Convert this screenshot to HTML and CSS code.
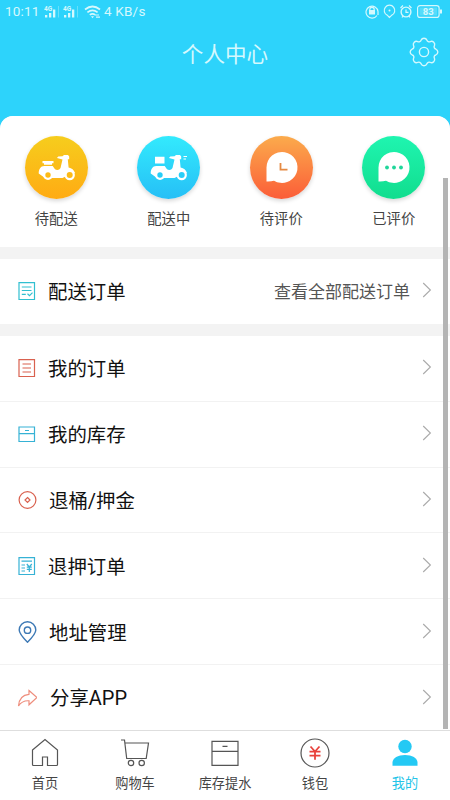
FILE: index.html
```html
<!DOCTYPE html>
<html lang="zh-CN">
<head>
<meta charset="utf-8">
<title>个人中心</title>
<link rel="stylesheet" href="styles.css">
</head>
<body>
<div class="app">
  <header class="header">
    <div class="status">
      <span class="time">10:11</span>
      <svg class="signals" width="36" height="14" viewBox="0 0 36 14" fill="currentColor">
        <g id="sig"><text x="0" y="5.500" class="net">4G</text><path d="M1 10h2.300v2.500H1zM5 8h2.300v4.500H5zM9 4.500h2.300v8H9z"/><path d="M14 1h1v11.500h-1z" opacity=".35"/></g>
        <use href="#sig" x="19"/>
      </svg>
      <svg class="wifi" width="18" height="14" viewBox="0 0 18 14" fill="none" stroke="currentColor" stroke-width="1.700">
        <path d="M1 4.500Q8.500-1.500 16 4.500M3.400 7.300q5.100-4 10.200 0M5.800 9.900q2.700-2 5.400 0"/><path d="M7 11.300h3l-1.500 2z" fill="currentColor" stroke="none"/><path d="M11 10h4M12 12.200h4" stroke-width="1.200"/>
      </svg>
      <span class="speed">4 KB/s</span>
      <svg class="sys" width="79" height="15" viewBox="0 0 79 15" fill="none" stroke="currentColor" stroke-width="1.200">
        <path d="M12 11.500A6 6 0 1 1 13 7.500V11M4.800 6.700V5.500a2.200 2.200 0 0 1 4.400 0v1.200"/><path d="M4 6h6v4.500H4z" fill="currentColor" stroke="none"/>
        <path d="M24.500 13.500l-2-2.100a5.300 5.300 0 1 1 4 0z"/><circle cx="24.500" cy="6.500" r="1" fill="currentColor" stroke="none"/>
        <circle cx="41" cy="8" r="4.900" stroke-width="1.400"/><path d="M41 5.500V8.300h2.500M35.500 4l2.500-2.500M46.500 4L44 1.500M37 13.500l1-1.500M45 13.500l-1-1.500"/>
        <rect x="52.600" y="1.600" width="21.500" height="11.800" rx="2.500"/><path d="M75 5.500h2v4h-2z" fill="currentColor" stroke="none"/><rect x="54.500" y="3.500" width="17.500" height="8" fill="currentColor" stroke="none" opacity=".25"/>
        <text x="63.300" y="11" text-anchor="middle" class="battery">83</text>
      </svg>
    </div>
    <h1 class="title">个人中心</h1>
    <svg class="gear" width="30" height="30" viewBox="-15 -15 30 30" fill="none" stroke="currentColor" stroke-width="1.400">
      <path d="M11.840-2.950A3.200 3.200 0 0 1 11.840 2.950A2.200 2.200 0 0 0 10.460 6.290A3.200 3.200 0 0 1 6.290 10.460A2.200 2.200 0 0 0 2.950 11.840A3.200 3.200 0 0 1-2.950 11.840A2.200 2.200 0 0 0-6.290 10.460A3.200 3.200 0 0 1-10.460 6.290A2.200 2.200 0 0 0-11.840 2.950A3.200 3.200 0 0 1-11.840-2.950A2.200 2.200 0 0 0-10.460-6.290A3.200 3.200 0 0 1-6.290-10.460A2.200 2.200 0 0 0-2.950-11.840A3.200 3.200 0 0 1 2.950-11.840A2.200 2.200 0 0 0 6.290-10.460A3.200 3.200 0 0 1 10.460-6.290A2.200 2.200 0 0 0 11.840-2.950Z"/><circle r="4.600"/>
    </svg>
  </header>

  <main class="content">
    <section class="shortcuts">
      <div class="shortcut">
        <svg class="disc yellow" viewBox="0 0 63 63">
          <g fill="#fff"><path d="M17.500 25h11v2.300h-1.500v1.500h-8v-1.500h-1.500z"/><path d="M32 22l1.200-1.500 4.300-.3 1.500-1.200h4l1.200 1.500v2.800h-1.400l.8 8.200c3.200.5 5.400 2.500 6.400 5.500l-5.500 1.500-7 3.500H20l-6.300-4.500c0-4.500 2-7.300 5.500-7.500h8.500l2.300 3.200c2 1.300 4.500.8 5.500-1.200l2-8.500z"/><circle cx="23" cy="39" r="4.900"/><circle cx="44.700" cy="39" r="5.200"/></g><g fill="#fdbb17"><circle cx="23" cy="39" r="2.700"/><circle cx="44.700" cy="39" r="3"/></g>
        </svg>
        <span>待配送</span>
      </div>
      <div class="shortcut">
        <svg class="disc blue" viewBox="0 0 63 63">
          <g fill="#fff"><path d="M18 20.800h9.500v6.700H18zM46.500 20h3.500v1h-3.500zM46.500 22.500h2.500v1h-2.500z"/><path d="M32 22l1.200-1.500 4.300-.3 1.500-1.200h4l1.200 1.500v2.800h-1.400l.8 8.200c3.200.5 5.400 2.500 6.400 5.500l-5.500 1.500-7 3.500H20l-6.300-4.500c0-4.500 2-7.300 5.500-7.500h8.500l2.300 3.200c2 1.300 4.500.8 5.500-1.200l2-8.500z"/><circle cx="23" cy="39" r="4.900"/><circle cx="44.700" cy="39" r="5.200"/></g><g fill="#27cef8"><circle cx="23" cy="39" r="2.700"/><circle cx="44.700" cy="39" r="3"/></g>
        </svg>
        <span>配送中</span>
      </div>
      <div class="shortcut">
        <svg class="disc orange" viewBox="0 0 63 63"><path d="M16.500 45.500V31.500a15.500 15.500 0 1 1 7.500 13.200q-3 1-7.500.8z" fill="#fff"/><path d="M30.500 27v6.700h7" fill="none" stroke="#e58a43" stroke-width="1.800"/></svg>
        <span>待评价</span>
      </div>
      <div class="shortcut">
        <svg class="disc green" viewBox="0 0 63 63"><path d="M16.500 45.500V31.500a15.500 15.500 0 1 1 7.500 13.200q-3 1-7.500.8z" fill="#fff"/><g fill="#20d69a"><circle cx="25" cy="31.500" r="1.900"/><circle cx="32" cy="31.500" r="1.900"/><circle cx="39" cy="31.500" r="1.900"/></g></svg>
        <span>已评价</span>
      </div>
    </section>

    <section class="row delivery">
      <svg class="icon cyan" viewBox="0 0 20 20"><path d="M2 1.700h15.500v16.800H2zM4.800 6h9.700M4.800 9.500h9.700M4.800 13.300h4M10.500 12.800l2 1.800 3-3"/></svg>
      <span class="label">配送订单</span><span class="more">查看全部配送订单</span>
      <svg class="chevron" viewBox="0 0 10 16"><path d="M1.200 1l7.200 7-7.200 7"/></svg>
    </section>

    <nav class="menu">
      <div class="row">
        <svg class="icon red" viewBox="0 0 20 20"><path d="M2 1.700h15.500v16.800H2zM5.500 6h8.500M5.500 10h8.500M5.500 14h8.500"/></svg>
        <span class="label">我的订单</span>
        <svg class="chevron" viewBox="0 0 10 16"><path d="M1.200 1l7.200 7-7.200 7"/></svg>
      </div>
      <div class="row">
        <svg class="icon sky" viewBox="0 0 20 20"><path d="M2 3h15.500v14.500H2zM2 9.700h15.500M8 6.500h4"/></svg>
        <span class="label">我的库存</span>
        <svg class="chevron" viewBox="0 0 10 16"><path d="M1.200 1l7.200 7-7.200 7"/></svg>
      </div>
      <div class="row">
        <svg class="icon red" viewBox="0 0 20 20"><circle cx="10.500" cy="10" r="8.400"/><path d="M10.500 7.500l2.500 2.500-2.500 2.500-2.500-2.500z"/></svg>
        <span class="label wide">退桶<span class="latin">/</span>押金</span>
        <svg class="chevron" viewBox="0 0 10 16"><path d="M1.200 1l7.200 7-7.200 7"/></svg>
      </div>
      <div class="row">
        <svg class="icon sky" viewBox="0 0 20 20"><path d="M2 1.700h15.500v16.800H2zM4.500 5.200h10.500M4.500 9h3.500M4.500 12h3.500M4.500 15h3.500M9.800 8l2.500 3 2.500-3M9.800 11.200h5M9.800 13.400h5M12.300 11v5"/></svg>
        <span class="label">退押订单</span>
        <svg class="chevron" viewBox="0 0 10 16"><path d="M1.200 1l7.200 7-7.200 7"/></svg>
      </div>
      <div class="row">
        <svg class="icon navy" viewBox="0 0 20 22"><path d="M10.500 21.200C5 15.700 2.200 12.500 2.200 9a8.300 8.300 0 0 1 16.600 0c0 3.500-2.800 6.700-8.300 12.200z"/><circle cx="10.500" cy="9.200" r="3.200"/></svg>
        <span class="label wide">地址管理</span>
        <svg class="chevron" viewBox="0 0 10 16"><path d="M1.200 1l7.200 7-7.200 7"/></svg>
      </div>
      <div class="row">
        <svg class="icon salmon" viewBox="0 0 20 20"><path d="M12 2.500l8 7-8 7.300v-4C7 12.500 4 14 1.500 18 2 10.500 6 6.800 12 6.300z"/></svg>
        <span class="label share">分享<span class="latin">APP</span></span>
        <svg class="chevron" viewBox="0 0 10 16"><path d="M1.200 1l7.200 7-7.200 7"/></svg>
      </div>
    </nav>
    <div class="scrollbar"></div>
  </main>

  <footer class="tabs">
    <div class="tab">
      <svg viewBox="0 0 30 30"><path d="M2.500 12L15 1.500 27.500 12v14.500a1 1 0 0 1-1 1H17.500v-8.500h-5v8.500H3.500a1 1 0 0 1-1-1z"/></svg><span>首页</span>
    </div>
    <div class="tab">
      <svg viewBox="0 0 30 30"><path d="M1 2h3.500l2.200 18.500h19.500L28.500 5H5"/><circle cx="11" cy="25" r="2.700"/><circle cx="21.700" cy="25" r="2.700"/></svg><span>购物车</span>
    </div>
    <div class="tab">
      <svg viewBox="0 0 30 30"><path d="M2 3.300h26v24H2zM2 13.300h26M12.500 8.300h5"/></svg><span>库存提水</span>
    </div>
    <div class="tab">
      <svg viewBox="0 0 30 30"><circle cx="15" cy="15" r="14"/><path d="M10.500 8.500l4.500 5 4.500-5M9.500 13.700h11M9.500 17.700h11M15 13.500v8.300" stroke="#e8423c" stroke-width="1.800"/></svg><span>钱包</span>
    </div>
    <div class="tab active">
      <svg viewBox="0 0 30 30"><circle cx="15" cy="8.500" r="6.700"/><path d="M2.500 27.700v-3.200c0-4.500 5.500-7.500 12.500-7.500s12.500 3 12.500 7.500v3.200z"/></svg><span>我的</span>
    </div>
  </footer>
</div>
</body>
</html>
```
FILE: styles.css
```css
* { box-sizing: border-box; }
body {
  margin: 0;
  font-family: "Noto Sans CJK SC", sans-serif;
  color: #111;
  background: #fff;
}
svg { display: block; flex: none; }
.app {
  width: 450px;
  height: 800px;
  display: flex;
  flex-direction: column;
  overflow: hidden;
  background: #2dd3fb;
}

.header {
  position: relative;
  height: 116px;
  color: #d5f8fd;
}
.status {
  display: flex;
  align-items: center;
  height: 23px;
  padding: 0 6px 0 5px;
  font: 13.500px/23px Roboto, sans-serif;
}
.time { width: 39px; letter-spacing: .2px; }
.signals { width: 36px; }
.wifi { margin-left: 4px; }
.speed { margin-left: 2px; letter-spacing: .2px; }
.sys { margin-left: auto; }
.net { font: bold 6.500px Roboto, sans-serif; }
.battery { font: bold 9.500px Roboto, sans-serif; fill: currentColor; stroke: none; }
.title {
  margin: 14px 0 0;
  text-align: center;
  font-size: 21.600px;
  line-height: 32px;
  font-weight: 400;
}
.gear { position: absolute; right: 11px; top: 37px; }

.content {
  position: relative;
  height: 614px;
  background: #f3f3f3;
  border-radius: 13px 13px 0 0;
}
.shortcuts {
  display: flex;
  height: 131px;
  padding-top: 20px;
  background: #fff;
  border-radius: 13px 13px 0 0;
}
.shortcut {
  width: 112.500px;
  display: flex;
  flex-direction: column;
  align-items: center;
  font-size: 14.300px;
  line-height: 20px;
  color: #444;
}
.shortcut span { margin-top: 9px; }
.disc {
  width: 63px;
  height: 63px;
  border-radius: 50%;
  box-shadow: 0 2px 4px rgba(0, 0, 0, .16);
}
.yellow { background: linear-gradient(#f6cd1d, #ffab13); }
.blue { background: linear-gradient(#33eafd, #26bff6); }
.orange { background: linear-gradient(#fbab4c, #fb5d38); }
.green { background: linear-gradient(#1ff5b0, #11dd8e); }

.row {
  flex: 1;
  display: flex;
  align-items: center;
  padding: 0 18px 0 17px;
  background: #fff;
}
.delivery { height: 65px; margin: 12px 0; padding-bottom: 1px; }
.menu {
  display: flex;
  flex-direction: column;
  height: 394px;
}
.menu .row + .row { border-top: 1px solid #f2f2f2; }
.icon {
  width: 20px;
  height: 20px;
  fill: none;
  stroke: currentColor;
  stroke-width: 1.200;
}
.navy { height: 22px; stroke-width: 1.400; }
.cyan { color: #31bfd0; }
.red { color: #d9614f; }
.sky { color: #36b2d5; }
.navy { color: #3d79b5; }
.salmon { color: #ee8d7c; }
.label {
  margin-left: 11px;
  font-size: 19.400px;
  line-height: 28px;
}
.label.wide { margin-left: 12px; }
.label.share { margin-left: 13px; }
.latin { font-family: Roboto, sans-serif; font-size: 20px; }
.more {
  margin-left: auto;
  font-size: 17px;
  line-height: 26px;
  color: #555;
}
.chevron {
  width: 10px;
  height: 16px;
  margin-left: auto;
  margin-bottom: 2px;
  fill: none;
  stroke: #aaa;
  stroke-width: 1.100;
}
.more + .chevron { margin-left: 12px; }
.scrollbar {
  position: absolute;
  right: 2px;
  top: 62px;
  width: 5px;
  height: 551px;
  background: #b4b4b4;
}

.tabs {
  display: flex;
  height: 70px;
  border-top: 1px solid #dedede;
  background: #fff;
}
.tab {
  flex: 1;
  display: flex;
  flex-direction: column;
  align-items: center;
  padding-top: 7px;
  font-size: 13.200px;
  line-height: 20px;
  color: #444;
}
.tab svg {
  width: 30px;
  height: 30px;
  fill: none;
  stroke: #555;
  stroke-width: 1.200;
}
.tab span { margin-top: 5px; }
.tab.active { color: #24c4e8; }
.tab.active svg { fill: #24c9f4; stroke: none; }
```
